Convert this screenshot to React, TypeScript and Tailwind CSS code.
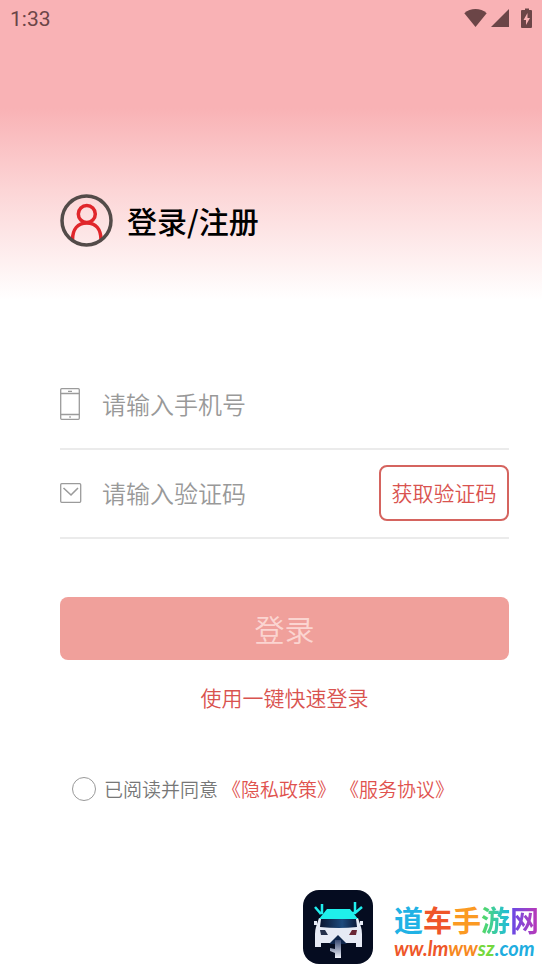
import { useState } from "react";

function StatusBar() {
  return (
    <header className="flex h-9 items-center justify-between pl-[10px] pr-[7px] text-[#6b4547]">
      <time className="pt-1 font-[Roboto,sans-serif] text-[21px]">1:33</time>
      <div className="flex items-center gap-1">
        <svg width="24" height="20" viewBox="0 0 24 20" fill="currentColor" aria-label="Wi-Fi">
          <path d="M12.500 19 1.300 5.200C4.500 2.400 8.300 1 12.500 1s8 1.400 11.200 4.200Z" />
        </svg>
        <svg width="18" height="18" viewBox="0 0 18 18" fill="currentColor" aria-label="Signal">
          <path d="M18 0v18H0Z" />
        </svg>
        <svg width="22" height="20" viewBox="3 0 22 20" aria-label="Battery charging">
          <path
            d="M12 2h3V.5h4V2h2q1 0 1 1v16q0 1-1 1h-9q-1 0-1-1V3q0-1 1-1Z"
            fill="currentColor"
          />
          <path d="M17.500 5 13.500 12h2.500v5l4-7h-2.500Z" fill="#f9b2b5" />
        </svg>
      </div>
    </header>
  );
}

function UserBadge() {
  return (
    <svg width="53" height="53" viewBox="0 0 53 53" fill="none" aria-hidden="true">
      <g stroke="#e0262b" strokeWidth="3.500">
        <circle cx="26.800" cy="20" r="8.500" />
        <path d="M12.500 46C12.500 35 18 29 26.800 29S41 35 41 46" />
      </g>
      <circle cx="26.500" cy="26.500" r="24.500" stroke="#534b49" strokeWidth="3.500" />
    </svg>
  );
}

function PhoneIcon() {
  return (
    <svg width="22" height="32" viewBox="0 0 22 32" fill="none" stroke="#9b9b9b" strokeWidth="1.300" aria-hidden="true">
      <rect x="0.700" y="0.700" width="18.600" height="30.600" rx="1" />
      <path d="M0.500 5.500h19M0.500 26.500h19M8 3.300h4M9.300 29h1.500" />
    </svg>
  );
}

function MailIcon() {
  return (
    <svg width="22" height="20" viewBox="0 0 22 20" fill="none" stroke="#9b9b9b" strokeWidth="1.300" aria-hidden="true">
      <rect x="0.700" y="0.700" width="20" height="18.600" rx="1" />
      <path d="M3.500 5 11 12l7-7" strokeWidth="1.600" />
    </svg>
  );
}

function SiteLogo() {
  return (
    <svg width="70" height="74" viewBox="0 0 70 74" className="shrink-0" aria-hidden="true">
      <defs>
        <linearGradient id="glass" x1="0" x2="1">
          <stop offset="0" stopColor="#0b1530" />
          <stop offset=".6" stopColor="#1d4a7d" />
          <stop offset="1" stopColor="#0c1a3a" />
        </linearGradient>
        <linearGradient id="beam" x1="0" x2="0" y1="0" y2="1">
          <stop offset="0" stopColor="#3a4a72" />
          <stop offset="1" stopColor="#f1f3fb" />
        </linearGradient>
      </defs>
      <rect width="70" height="74" rx="16" fill="#050c20" />
      <path
        d="M16 28 13 37q-1 3-1 7v13h6v-4h35v4h6V44q0-4-1-7l-3-9Z"
        fill="#e6eaf5"
      />
      <path d="M24 19h23l8 10H16Z" fill="#1ff0eb" />
      <path d="M18 29h35l1 8Q36 39 17 37Z" fill="url(#glass)" />
      <path d="M11 31h3v4h-3ZM57 31h3v4h-3Z" fill="#e6eaf5" />
      <path d="M17 40h5l3 5h-7Z" fill="#24304b" />
      <path d="M54 40h-5l-3 5h7Z" fill="#692635" />
      <path d="M35 45 26 54h18Z" fill="#10264b" />
      <path d="M32 50h6v18h-6v-5l-5-2v-3l5 1Z" fill="url(#beam)" />
      <path
        d="M19 14v9h-3M12 17l6 7M52 12v11M59 17l-7 6h-3"
        stroke="#20eeed"
        strokeWidth="2.500"
        fill="none"
      />
    </svg>
  );
}

export default function App() {
  const [phone, setPhone] = useState("");
  const [code, setCode] = useState("");
  const [agreed, setAgreed] = useState(false);

  return (
    <div className="flex min-h-screen flex-col bg-white bg-[linear-gradient(to_bottom,#f9b2b5_108px,#fcd5d6_190px,#fff_300px)] font-['Noto_Sans_CJK_SC',sans-serif]">
      <StatusBar />
      <main className="flex flex-col pl-[60px] pr-[33px] pt-[158px]">
        <div className="flex h-[53px] items-center gap-[14px]">
          <UserBadge />
          <h1 className="pb-0.5 text-[30px] font-medium leading-[44px] text-black">登录/注册</h1>
        </div>
        <form className="mt-[113px] flex flex-col" onSubmit={(e) => e.preventDefault()}>
          <div className="flex h-[90px] items-center gap-5 border-b-2 border-[#ebebeb]">
            <label htmlFor="phone" aria-label="手机号">
              <PhoneIcon />
            </label>
            <input
              id="phone"
              type="tel"
              value={phone}
              onChange={(e) => setPhone(e.target.value)}
              placeholder="请输入手机号"
              className="h-12 min-w-0 flex-1 pb-0.5 text-2xl font-[350] text-[#555] outline-none placeholder:text-[#999]"
            />
          </div>
          <div className="flex h-[89px] items-center gap-5 border-b-2 border-[#ebebeb] pb-0.5">
            <label htmlFor="code" aria-label="验证码">
              <MailIcon />
            </label>
            <input
              id="code"
              type="text"
              value={code}
              onChange={(e) => setCode(e.target.value)}
              placeholder="请输入验证码"
              className="h-12 min-w-0 flex-1 text-2xl font-[350] text-[#555] outline-none placeholder:text-[#999]"
            />
            <button
              type="button"
              className="h-14 w-[130px] rounded-lg border-2 border-[#d5645f] text-[21px] font-[350] text-[#d9534f]"
            >
              获取验证码
            </button>
          </div>
          <button
            type="submit"
            className="mt-[58px] h-[63px] rounded-lg bg-[#f0a09b] text-[30px] font-[350] text-[#fbd5d1]"
          >
            登录
          </button>
          <button
            type="button"
            className="mt-[21px] self-center text-[21px] font-[350] leading-8 text-[#d9534f]"
          >
            使用一键快速登录
          </button>
          <div className="mt-[61px] flex items-center gap-1 pl-3 text-[19px] font-[350] leading-[30px] text-[#777]">
            <input
              id="agree"
              type="checkbox"
              checked={agreed}
              onChange={(e) => setAgreed(e.target.checked)}
              className="mr-1 size-6 shrink-0 appearance-none rounded-full border border-[#999] checked:bg-[#d9534f]"
            />
            <label htmlFor="agree">已阅读并同意</label>
            <a href="#privacy" className="text-[#e0524e]">
              《隐私政策》
            </a>
            <a href="#terms" className="text-[#e0524e]">
              《服务协议》
            </a>
          </div>
        </form>
      </main>
      <footer className="mt-auto flex items-end justify-end gap-[21px] pb-px pr-[3px]">
        <SiteLogo />
        <div className="pb-1">
          <p className="flex font-['Liberation_Sans','Noto_Sans_CJK_SC',sans-serif] text-[29px] font-bold leading-7">
            <span className="text-[#20b2e5]">道</span>
            <span className="text-[#ef562a]">车</span>
            <span className="text-[#fb9a23]">手</span>
            <span className="-my-2 bg-linear-to-r from-[#56d957] to-[#1fb8df] bg-clip-text py-2 text-transparent">游</span>
            <span className="-my-2 bg-linear-to-r from-[#6247e8] to-[#bd32b5] bg-clip-text py-2 text-transparent">网</span>
          </p>
          <p className="flex font-[Lato,sans-serif] text-xl font-bold italic leading-6">
            <span className="text-[#ee5729]">ww.lm</span>
            <span className="text-[#f7891f]">ww</span>
            <span className="text-[#75d83d]">sz</span>
            <span className="text-[#20addf]">.com</span>
          </p>
        </div>
      </footer>
    </div>
  );
}
